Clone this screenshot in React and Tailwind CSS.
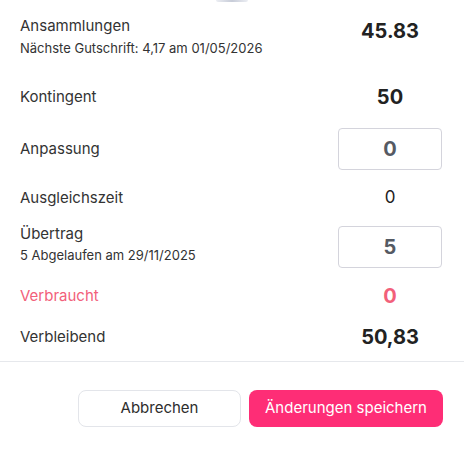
const FONT = { fontFamily: 'Inter, Lato, sans-serif' };

function ValueInput({ value }) {
  return (
    <div className="w-[104px] h-[42px] rounded-[4px] border border-[#d4d4dc] bg-white flex items-center justify-center text-[20px] font-bold text-[#555a63]">
      {value}
    </div>
  );
}

export default function App() {
  return (
    <div className="w-[464px] h-[453px] bg-white text-[#333] flex flex-col" style={FONT}>
      {/* remains of the avatar above */}
      <div className="mx-auto w-[32px] h-[2px] rounded-b-full bg-gradient-to-r from-[#eceef3] via-[#c7ccd8] to-[#eceef3]" />

      <div className="pl-5 pr-[22px] flex flex-col">
        <div className="mt-[14px] flex justify-between items-start">
          <div>
            <p className="text-[15px] leading-5">Ansammlungen</p>
            <p className="mt-[2px] text-[13px] leading-5">Nächste Gutschrift: 4,17 am 01/05/2026</p>
          </div>
          <div className="w-[104px] text-center text-[20px] leading-[30px] font-bold text-[#222]">45.83</div>
        </div>

        <div className="mt-[24px] h-[30px] flex justify-between items-center">
          <p className="text-[15px]">Kontingent</p>
          <div className="w-[104px] text-center text-[20px] font-bold text-[#222]">50</div>
        </div>

        <div className="mt-[16px] flex justify-between items-center">
          <p className="text-[15px]">Anpassung</p>
          <ValueInput value="0" />
        </div>

        <div className="mt-[13px] h-[30px] flex justify-between items-center">
          <p className="text-[15px]">Ausgleichszeit</p>
          <div className="w-[104px] text-center text-[17px] text-[#222]">0</div>
        </div>

        <div className="mt-[11px] flex justify-between items-start">
          <div>
            <p className="text-[15px] leading-5">Übertrag</p>
            <p className="mt-[1px] text-[13px] leading-5">5 Abgelaufen am 29/11/2025</p>
          </div>
          <div className="mt-[2px]">
            <ValueInput value="5" />
          </div>
        </div>

        <div className="mt-[13px] h-[30px] flex justify-between items-center">
          <p className="text-[15px] text-[#f2607a]">Verbraucht</p>
          <div className="w-[104px] text-center text-[20px] font-bold text-[#f2607a]">0</div>
        </div>

        <div className="mt-[11px] h-[30px] flex justify-between items-center">
          <p className="text-[15px]">Verbleibend</p>
          <div className="w-[104px] text-center text-[20px] font-bold text-[#222]">50,83</div>
        </div>
      </div>

      <div className="mt-[9px] h-px bg-[#e6e8ec]" />

      <div className="mt-[28px] pr-[21px] flex justify-end gap-2">
        <button className="w-[163px] h-[37px] rounded-lg border border-[#e3e5ea] bg-white text-[15px] text-[#2d2d2d]">
          Abbrechen
        </button>
        <button className="w-[194px] h-[37px] rounded-lg bg-[#fe2d76] text-[15px] text-white">
          Änderungen speichern
        </button>
      </div>
    </div>
  );
}
